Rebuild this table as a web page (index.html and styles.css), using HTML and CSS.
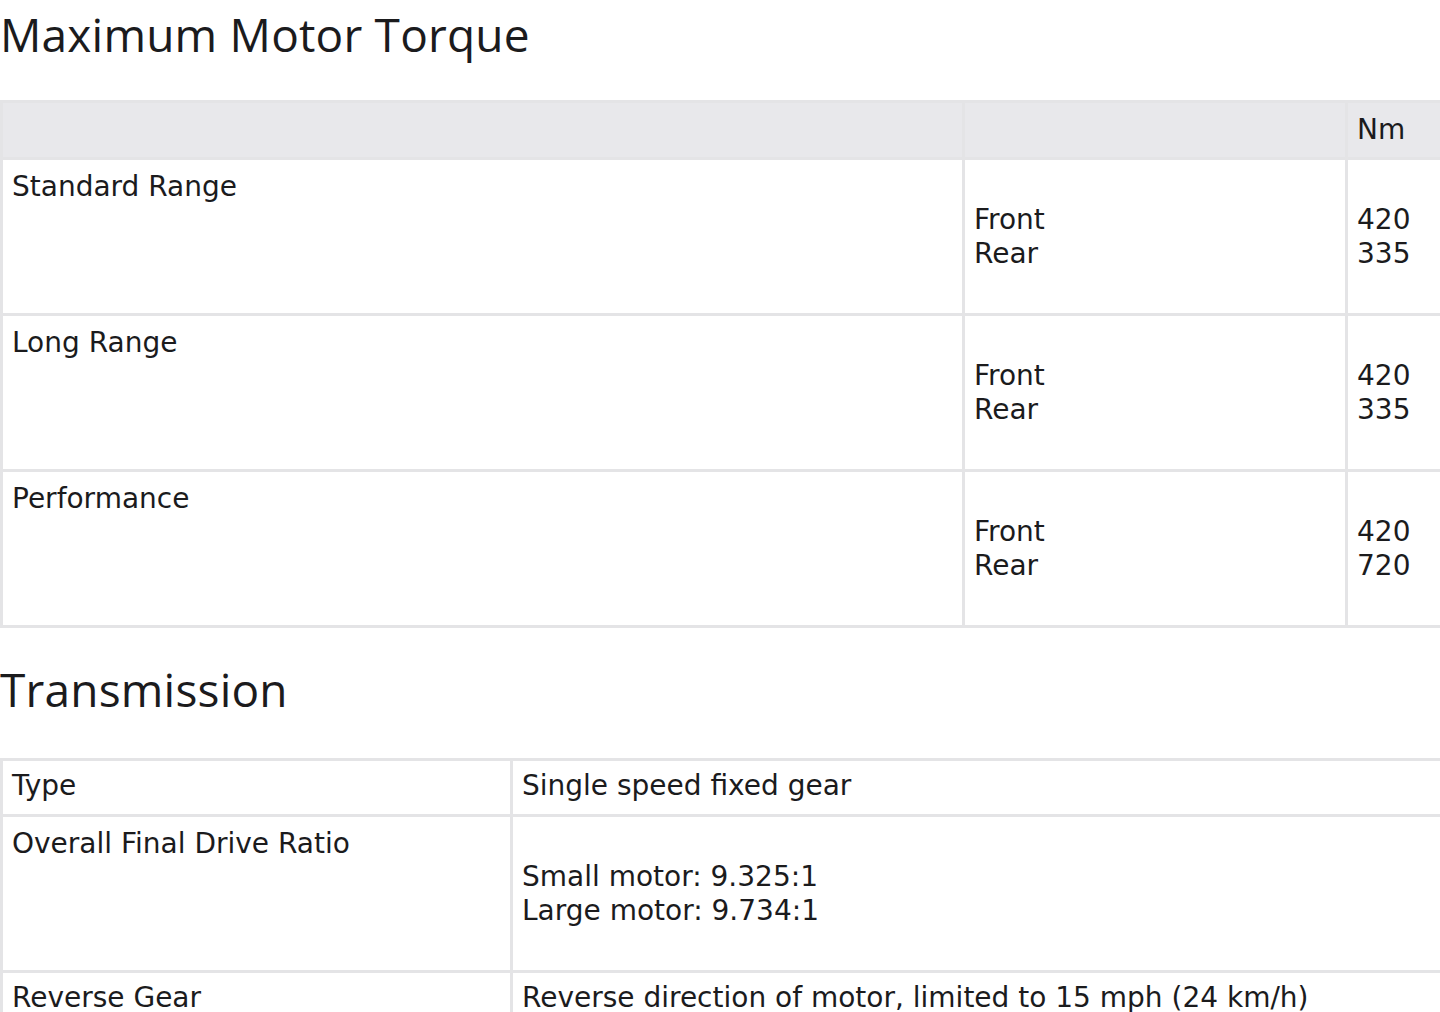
FILE: index.html
```html
<!DOCTYPE html>
<html lang="en">
<head>
  <meta charset="UTF-8">
  <meta name="viewport" content="width=device-width, initial-scale=1.0">
  <title>Specifications</title>
  <link rel="stylesheet" href="styles.css">
</head>
<body>
  <section class="spec-section">
    <h2 class="spec-title">Maximum Motor Torque</h2>
    <table class="spec-table torque-table">
      <colgroup>
        <col class="col-name">
        <col class="col-motor">
        <col class="col-value">
      </colgroup>
      <thead>
        <tr class="head-row">
          <th></th>
          <th></th>
          <th>Nm</th>
        </tr>
      </thead>
      <tbody>
        <tr class="tall-row">
          <td class="row-label">Standard Range</td>
          <td class="mid">Front<br>Rear</td>
          <td class="mid">420<br>335</td>
        </tr>
        <tr class="tall-row">
          <td class="row-label">Long Range</td>
          <td class="mid">Front<br>Rear</td>
          <td class="mid">420<br>335</td>
        </tr>
        <tr class="tall-row">
          <td class="row-label">Performance</td>
          <td class="mid">Front<br>Rear</td>
          <td class="mid">420<br>720</td>
        </tr>
      </tbody>
    </table>
  </section>

  <section class="spec-section">
    <h2 class="spec-title transmission">Transmission</h2>
    <table class="spec-table trans-table">
      <colgroup>
        <col class="col-key">
        <col class="col-desc">
      </colgroup>
      <tbody>
        <tr class="short-row">
          <td class="row-label">Type</td>
          <td class="row-label">Single speed fixed gear</td>
        </tr>
        <tr class="tall-row">
          <td class="row-label">Overall Final Drive Ratio</td>
          <td class="mid">Small motor: 9.325:1<br>Large motor: 9.734:1</td>
        </tr>
        <tr class="short-row">
          <td class="row-label">Reverse Gear</td>
          <td class="row-label">Reverse direction of motor, limited to 15 mph (24 km/h)</td>
        </tr>
      </tbody>
    </table>
  </section>
</body>
</html>
```

FILE: styles.css
```css
body {
  margin: 0;
  font-family: 'DejaVu Sans', 'Open Sans', sans-serif;
  color: #1b1b1d;
  background: #ffffff;
  overflow: hidden;
}

.spec-title {
  font-family: 'Open Sans', 'Liberation Sans', sans-serif;
  font-size: 46px;
  font-weight: 400;
  line-height: 1.2;
  margin: 7px 0 38px;
  letter-spacing: 0.2px;
}

.spec-title.transmission {
  margin: 34px 0 41px;
}

.spec-table {
  border-collapse: collapse;
  table-layout: fixed;
  font-size: 28px;
  line-height: 34px;
}

.torque-table {
  width: 1480px;
}

.torque-table .col-name {
  width: 962px;
}

.torque-table .col-motor {
  width: 383px;
}

.trans-table {
  width: 1480px;
}

.trans-table .col-key {
  width: 510px;
}

.spec-table th,
.spec-table td {
  border: 3px solid #e4e4e6;
  padding: 8px 9px;
  text-align: left;
  font-weight: 400;
}

.head-row th {
  background: #e8e8eb;
  height: 38px;
  vertical-align: middle;
}

.row-label {
  vertical-align: top;
}

.mid {
  vertical-align: middle;
}

.tall-row td {
  height: 137px;
}

.tall-row .row-label {
  padding-top: 10px;
  padding-bottom: 6px;
}

.short-row td {
  height: 37px;
}
```
